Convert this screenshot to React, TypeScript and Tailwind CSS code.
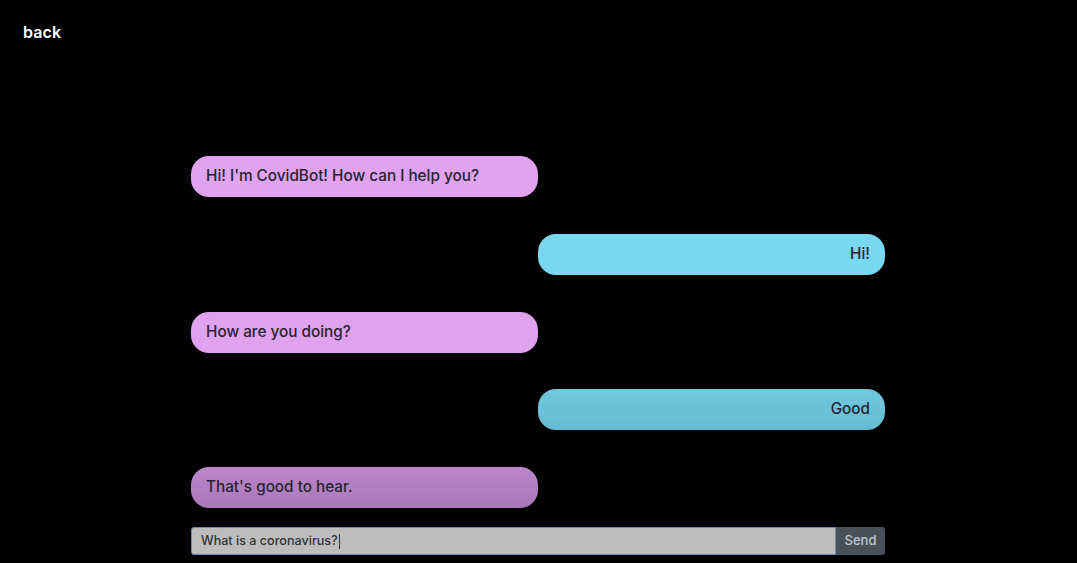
import React from "react";

type Msg = { from: "bot" | "user"; text: string; cls: string };

const messages: Msg[] = [
  { from: "bot", text: "Hi! I'm CovidBot! How can I help you?", cls: "bg-[#dfa3f0]" },
  { from: "user", text: "Hi!", cls: "bg-[#78d8ef]" },
  { from: "bot", text: "How are you doing?", cls: "bg-[#dea2ef]" },
  { from: "user", text: "Good", cls: "bg-gradient-to-b from-[#6fc9df] to-[#65bbd2]" },
  { from: "bot", text: "That's good to hear.", cls: "bg-gradient-to-b from-[#bb86ca] to-[#aa78b8]" },
];

export default function App() {
  return (
    <div
      className="w-[1077px] h-[563px] bg-black overflow-hidden flex flex-col"
      style={{ fontFamily: "Inter, 'Noto Sans', sans-serif" }}
    >
      <div className="pl-[23px] pt-[20px] h-[156px]">
        <span className="text-white text-[16px] font-semibold leading-[20px] tracking-[0.1px]">back</span>
      </div>
      <div className="w-[694px] ml-[191px] flex flex-col gap-[36.75px]">
        {messages.map((m, i) => (
          <div key={i} className={`flex ${m.from === "user" ? "justify-end" : "justify-start"}`}>
            <div
              className={`w-[347px] h-[41px] rounded-[18px] flex items-center px-[15px] text-[15.3px] font-medium text-[#2a2230] ${
                m.from === "user" ? "justify-end" : "justify-start"
              } ${m.cls}`}
            >
              {m.text}
            </div>
          </div>
        ))}
      </div>
      <div className="w-[694px] ml-[191px] mt-[19px] flex h-[28px]">
        <div className="flex-1 bg-[#bdbdbd] border border-[#6a8cb2] rounded-l-[3px] flex items-center pl-[9px] text-[12.6px] font-medium text-[#333]">
          What is a coronavirus?
          <span className="w-px h-[15px] bg-[#333] ml-px" />
        </div>
        <div className="w-[49px] bg-[#4a5057] rounded-r-[3px] flex items-center justify-center text-[13px] font-medium text-[#c2c6cb]">
          Send
        </div>
      </div>
    </div>
  );
}
